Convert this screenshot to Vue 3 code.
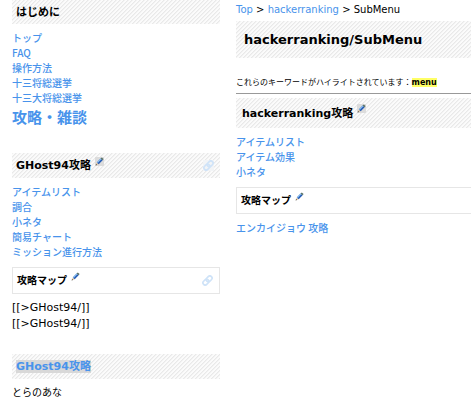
<script setup>
import { h } from 'vue'

const introLinks = ['トップ', 'FAQ', '操作方法', '十三将総選挙', '十三大将総選挙']
const guideLinks = ['アイテムリスト', '調合', '小ネタ', '簡易チャート', 'ミッション進行方法']
const pageLinks = ['アイテムリスト', 'アイテム効果', '小ネタ']

const PencilIcon = () =>
  h('svg', { viewBox: '0 0 9 9', width: 9, height: 9, 'aria-hidden': 'true' }, [
    h('path', { d: 'M0.8 8.2 L1.8 5.4 L3.7 7.2 Z', fill: '#e3c59a' }),
    h('path', { d: 'M0.6 8.4 L1.1 7 L2 7.9 Z', fill: '#333' }),
    h('path', { d: 'M1.8 5.4 L5.6 1.4 L7.6 3.2 L3.7 7.2 Z', fill: '#2158b4' }),
    h('path', { d: 'M1.9 5.3 L5.6 1.4 L6.5 2.2 L2.8 6.1 Z', fill: '#8cc0f0' }),
    h('path', { d: 'M5.6 1.4 L6.8 0.4 L8.6 2 L7.6 3.2 Z', fill: '#5b7468' })
  ])

const ChainIcon = () =>
  h('svg', { viewBox: '0 0 12 12', width: 11, height: 11, 'aria-hidden': 'true' }, [
    h('g', { fill: 'none', stroke: '#cfe3f8', 'stroke-width': 1.8, transform: 'rotate(-45 6 6)' }, [
      h('rect', { x: 0, y: 3.6, width: 7, height: 4.8, rx: 2.4 }),
      h('rect', { x: 5, y: 3.6, width: 7, height: 4.8, rx: 2.4 })
    ])
  ])
</script>

<template>
  <div class="page">
    <aside class="sidebar">
      <h2 class="band first">はじめに</h2>
      <ul class="links">
        <li v-for="t in introLinks" :key="t"><a href="#">{{ t }}</a></li>
        <li class="big"><a href="#">攻略・雑談</a></li>
      </ul>

      <h2 class="band spaced">
        <span>GHost94攻略</span>
        <a href="#" class="edit shaded" aria-label="edit"><PencilIcon /></a>
        <a href="#" class="anchor shaded-light" aria-label="link"><ChainIcon /></a>
      </h2>
      <ul class="links">
        <li v-for="t in guideLinks" :key="t"><a href="#">{{ t }}</a></li>
      </ul>

      <h3 class="boxed">
        <span>攻略マップ</span>
        <a href="#" class="edit" aria-label="edit"><PencilIcon /></a>
        <a href="#" class="anchor" aria-label="link"><ChainIcon /></a>
      </h3>
      <p class="plain raw">[[&gt;GHost94/]]<br />[[&gt;GHost94/]]</p>

      <h2 class="band spaced"><a href="#" class="marked">GHost94攻略</a></h2>
      <p class="plain">とらのあな</p>
    </aside>

    <main class="content">
      <nav class="crumbs">
        <a href="#">Top</a> &gt; <a href="#">hackerranking</a> &gt; SubMenu
      </nav>
      <h1 class="title">hackerranking/SubMenu</h1>
      <p class="notice">これらのキーワードがハイライトされています：<mark>menu</mark></p>
      <hr />
      <h2 class="band tall">
        <span>hackerranking攻略</span>
        <a href="#" class="edit shaded" aria-label="edit"><PencilIcon /></a>
      </h2>
      <ul class="links">
        <li v-for="t in pageLinks" :key="t"><a href="#">{{ t }}</a></li>
      </ul>
      <h3 class="boxed open">
        <span>攻略マップ</span>
        <a href="#" class="edit" aria-label="edit"><PencilIcon /></a>
      </h3>
      <ul class="links"><li><a href="#">エンカイジョウ 攻略</a></li></ul>
    </main>
  </div>
</template>

<style>
body {
  background: #fff;
}
</style>

<style scoped>
.page {
  display: grid;
  grid-template-columns: 208px 1fr;
  column-gap: 16px;
  padding-left: 12px;
  color: #000;
  font-family: Verdana, "DejaVu Sans", "Noto Sans CJK JP", sans-serif;
  font-size: 10px;
  line-height: 15px;
}
h1, h2, h3, p, ul {
  margin: 0;
  padding: 0;
}
a {
  color: #4893eb;
  text-decoration: none;
}
.content {
  min-width: 0;
  white-space: nowrap;
}
.band,
.title {
  background-color: #fafafa;
  background-image: linear-gradient(135deg, #e9e9e9 12%, #fbfbfb 13%, #fbfbfb 38%, #e9e9e9 39%, #e9e9e9 62%, #fbfbfb 63%, #fbfbfb 88%, #e9e9e9 89%);
  background-size: 4px 4px;
}
.band {
  display: flex;
  align-items: center;
  box-sizing: border-box;
  height: 25px;
  padding: 0 4px;
  font-size: 11px;
}
.first {
  height: 24px;
}
.spaced {
  margin-top: 16px;
}
.tall {
  height: 30px;
  padding: 0 6px;
}
.links {
  list-style: none;
  padding: 6px 0 8px;
  font-family: "Noto Sans CJK JP", sans-serif;
  font-weight: 500;
}
.links li {
  height: 15px;
}
.links .big {
  height: 24px;
  font-size: 15px;
  font-weight: 700;
  line-height: 24px;
}
.edit {
  display: flex;
  align-self: flex-start;
  margin: 4px 0 0 4px;
}
.tall .edit {
  margin-top: 6px;
}
.shaded {
  background: #dcdcdc;
}
.shaded-light {
  background: #f2f4f6;
}
.anchor {
  display: flex;
  margin-left: auto;
  margin-right: 2px;
}
.boxed {
  display: flex;
  align-items: center;
  box-sizing: border-box;
  height: 27px;
  padding: 0 4px;
  border: 1px solid #e6e6e6;
  font-size: 10px;
}
.open {
  border-right: 0;
}
.plain {
  padding: 6px 0 0;
}
.raw {
  padding-bottom: 6px;
  font-size: 11px;
  line-height: 16px;
}
.marked {
  background: #d8d8d8;
  line-height: 13px;
}
.crumbs {
  padding: 2px 0 4px;
}
.title {
  padding: 9px 8px;
  font-size: 13px;
  line-height: 19px;
}
.notice {
  padding: 17px 0 3px;
  font-size: 8px;
}
mark {
  background: #ffff66;
  color: inherit;
  font-weight: 700;
}
hr {
  height: 1px;
  margin: 0 0 4px;
  border: 0;
  background: #999;
}
</style>
